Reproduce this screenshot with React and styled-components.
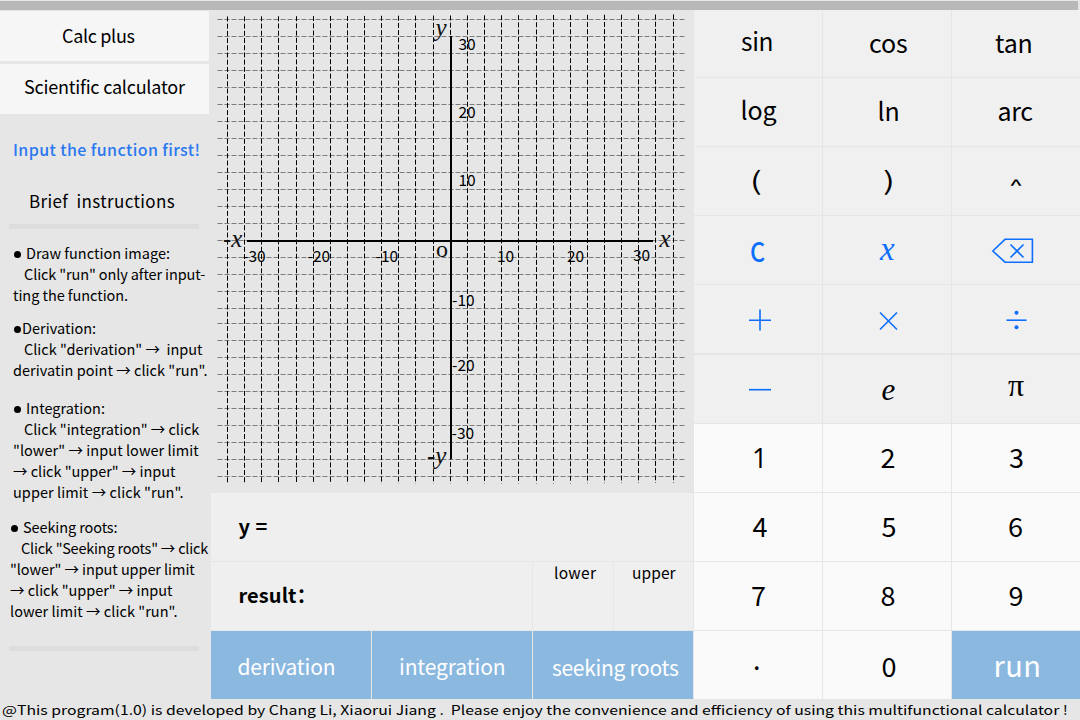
import React from 'react';
import styled, { createGlobalStyle } from 'styled-components';

const SANS = '"Noto Sans CJK SC", "Open Sans", sans-serif';
const SERIF = '"Liberation Serif", "Times New Roman", serif';
const BLUE = '#0d6efd';

const GlobalStyle = createGlobalStyle`
  * { box-sizing: border-box; }
  body { margin: 0; background: #e6e6e6; color: #000; font-family: ${SANS}; }
`;

const Page = styled.div`
  width: 1080px;
  height: 720px;
  overflow: hidden;
  display: flex;
  flex-direction: column;
  background: #e6e6e6;
`;

const TitleBar = styled.div`
  height: 9px;
  margin: 1px 2px 0 0;
  flex: none;
  background: #b8b8b8;
`;

const Main = styled.div`
  height: 689px;
  flex: none;
  display: grid;
  grid-template-columns: 211px 482px 387px;
`;

/* A single line of text: $left is the inset and $base the baseline, both from the box it sits in. */
const Label = styled.span`
  display: block;
  flex: none;
  white-space: pre;
  line-height: 1;
  font-family: ${(p) => p.$font || SANS};
  font-size: ${(p) => p.$size}px;
  font-weight: ${(p) => p.$weight || 400};
  font-style: ${(p) => (p.$italic ? 'italic' : 'normal')};
  letter-spacing: ${(p) => p.$track || 0}px;
  color: ${(p) => p.$color || 'inherit'};
  margin-left: ${(p) => p.$left}px;
  margin-top: ${(p) => p.$base - Math.round(p.$size * (p.$ascent || 0.936))}px;
  transform: ${(p) => (p.$stretch ? `scaleX(${p.$stretch})` : 'none')};
  transform-origin: left;
`;

/* ---------- sidebar ---------- */

const Sidebar = styled.aside`
  display: flex;
  flex-direction: column;
  padding-top: 1px;
  min-width: 0;
`;

const MenuItem = styled.div`
  width: 209px;
  height: 50px;
  margin-bottom: 3px;
  flex: none;
  display: flex;
  align-items: flex-start;
  background: #f6f6f6;
`;

const Banner = styled.div`
  height: ${(p) => p.$height}px;
  flex: none;
  display: flex;
  align-items: flex-start;
`;

const Rule = styled.div`
  width: 190px;
  height: 5px;
  margin-left: 9px;
  flex: none;
  background: #dedddd;
`;

const Instructions = styled.div`
  height: 417px;
  flex: none;
  padding-top: 13px;
`;

const Topic = styled.div`
  padding-left: ${(p) => p.$inset}px;
  margin-bottom: ${(p) => p.$gap}px;
`;

const Line = styled.div`
  height: 21px;
  line-height: 21px;
  font-size: 14.5px;
  white-space: pre;
  padding-left: ${(p) => p.$indent || 0}px;
  letter-spacing: ${(p) => p.$track || 0}px;
`;

const Bullet = styled.span`
  display: inline-block;
  width: 7px;
  height: 7px;
  border-radius: 50%;
  background: #000;
  margin: 0 ${(p) => p.$gap}px 1px 1px;
`;

const topics = [
  {
    inset: 13, gap: 12, dot: 5, title: 'Draw function image:', track: 0.01,
    lines: [['Click "run" only after input-', -0.12, 11], ['ting the function.', -0.05, 0]],
  },
  {
    inset: 13, gap: 17, dot: 1, title: 'Derivation:', track: 0.02,
    lines: [['Click "derivation" →  input', 0, 11], ['derivatin point → click "run".', 0.03, 0]],
  },
  {
    inset: 13, gap: 14, dot: 5, title: 'Integration:', track: 0.03,
    lines: [
      ['Click "integration" → click', -0.03, 11], ['"lower" → input lower limit', 0.05, 0],
      ['→ click "upper" → input', -0.03, 0], ['upper limit → click "run".', 0.06, 0],
    ],
  },
  {
    inset: 10, gap: 0, dot: 5, title: 'Seeking roots:', track: -0.1,
    lines: [
      ['Click "Seeking roots" → click', -0.22, 11], ['"lower" → input upper limit', -0.08, 0],
      ['→ click "upper" → input', -0.03, 0], ['lower limit → click "run".', 0.04, 0],
    ],
  },
];

/* ---------- plot and fields ---------- */

const Center = styled.section`
  display: flex;
  flex-direction: column;
`;

const PlotArea = styled.div`
  height: 482px;
  margin-bottom: 1px;
  flex: none;
  svg { display: block; }
`;

const Fields = styled.div`
  display: grid;
  gap: 1px;
  grid-template-columns: ${(p) => p.$columns};
  height: 68px;
  margin-bottom: 1px;
`;

const Field = styled.div`
  display: flex;
  align-items: flex-start;
  background: #efefef;
`;

const Action = styled(Field)`
  background: #8ab8df;
  color: #fff;
`;

const columns = [227.5, 244.5, 261.5, 278.5, 296.5, 313.5, 330.5, 347.5, 364.5, 381.5, 398.5, 415.5, 433.5, 450.5,
  467.5, 484.5, 501.5, 518.5, 536.5, 553.5, 570.5, 587.5, 604.5, 621.5, 638.5, 655.5, 673.5];
const rows = [19.5, 36.5, 53.5, 70.5, 87.5, 104.5, 121.5, 138.5, 155.5, 172.5, 189.5, 206.5, 223.5, 240.5, 257.5,
  274.5, 291.5, 308.5, 323.5, 340.5, 357.5, 374.5, 391.5, 408.5, 425.5, 442.5, 459.5, 476.5];
const ticks = [
  ['30', 458.5, 50], ['20', 458.5, 118], ['10', 458.5, 186], ['-10', 452, 306], ['-20', 452, 371], ['-30', 451.5, 439],
  ['-30', 243, 262], ['-20', 307.5, 262], ['-10', 375.5, 262], ['10', 497, 262], ['20', 567, 262], ['30', 633, 261],
];

const TickText = styled.text`
  font: 15.5px ${SANS};
`;

const AxisText = styled.text`
  font: italic 25px ${SERIF};
  fill: #111;
`;

const OriginText = styled(AxisText)`
  font-style: normal;
  font-size: 24px;
`;

function Plot() {
  return (
    <PlotArea>
      <svg width="482" height="482" viewBox="211 10 482 482">
        {rows.map((y) => (
          <line key={y} x1="217.5" x2="686" y1={y} y2={y} stroke="#7c7c7c" strokeDasharray="5 2" />
        ))}
        {columns.map((x, i) => (
          <line key={x} x1={x} x2={x} y1={16.5 - i * 0.08} y2={484.5 - i * 0.06} stroke="#000" strokeDasharray="5 2.2" />
        ))}
        <path d="M247 241H653M451 36V459" stroke="#000" strokeWidth="2" />
        {ticks.map(([t, x, y]) => (
          <TickText key={`${x}${y}`} x={x} y={y}>{t}</TickText>
        ))}
        <AxisText x="435.5" y="36">y</AxisText>
        <AxisText x="427" y="464">-y</AxisText>
        <AxisText x="223" y="247">-x</AxisText>
        <AxisText x="659.5" y="247">x</AxisText>
        <OriginText x="436" y="257">o</OriginText>
      </svg>
    </PlotArea>
  );
}

/* ---------- keypad ---------- */

const Keypad = styled.section`
  display: grid;
  grid-template-columns: 128px 128px 129px;
  grid-template-rows: 67px 68px 68px 68px 68px 69px 68px 68px 68px 68px;
  gap: 1px;
  padding-left: 1px;
`;

const Key = styled.div`
  display: flex;
  align-items: flex-start;
  min-width: 0;
  margin-top: ${(p) => (p.$spaced ? 1 : 0)}px;
  background: ${(p) => ({ fn: '#f0f0f0', num: '#fafafa', go: '#8ab8df' })[p.$kind]};
  color: ${(p) => (p.$kind === 'go' ? '#fff' : '#000')};
  svg { display: block; fill: none; stroke: ${BLUE}; stroke-width: 1.6; }
`;

const OpIcon = ({ name, children }) => (
  <svg width="128" height="68" viewBox="0 0 128 68" role="img" aria-label={name}>{children}</svg>
);

const fn = (text, left, base, extra) => ({ kind: 'fn', text, left, base, size: 25, ...extra });
const num = (text, left, base, extra) => ({ kind: 'num', text, left, base, size: 27, ...extra });

const keys = [
  fn('sin', 47, 42, { size: 24.5, track: -0.3 }), fn('cos', 46, 43, { track: -0.15 }), fn('tan', 43, 43, { track: -0.2 }),
  fn('log', 46.5, 42, { track: -0.1 }), fn('ln', 54.5, 43, { track: -0.1 }), fn('arc', 45.5, 43, { track: -0.4 }),
  fn('(', 55.5, 43, { size: 25, stretch: 1.4 }), fn(')', 59.5, 43, { size: 25, stretch: 1.4 }),
  fn('^', 56.5, 43, { size: 14, stretch: 1.75, weight: 500 }),
  fn('C', 56, 46, { size: 27, stretch: 0.87, color: BLUE, weight: 500 }),
  fn('x', 57, 45, { size: 33, font: SERIF, italic: true, ascent: 0.837, color: BLUE }),
  {
    kind: 'fn',
    icon: (
      <OpIcon name="backspace">
        <path d="M40.8 35 53 23.3H80.4V46.2H53Z" />
        <path d="M58.5 28.5 71.5 41.5M71.5 28.5 58.5 41.5" />
      </OpIcon>
    ),
  },
  { kind: 'fn', icon: <OpIcon name="plus"><path d="M55 35.3H77M66 24.5V45.5" /></OpIcon> },
  { kind: 'fn', icon: <OpIcon name="times"><path d="M57 27.5 74 44.5M74 27.5 57 44.5" /></OpIcon> },
  {
    kind: 'fn',
    icon: (
      <OpIcon name="divide">
        <path d="M54.5 35.2H74.5" />
        <circle cx="64.5" cy="27.8" r="2" fill={BLUE} stroke="none" />
        <circle cx="64.5" cy="42.3" r="2" fill={BLUE} stroke="none" />
      </OpIcon>
    ),
  },
  { kind: 'fn', spaced: true, icon: <OpIcon name="minus"><path d="M55 34.7H77" /></OpIcon> },
  fn('e', 58.5, 45, { size: 31, font: SERIF, italic: true, ascent: 0.837, spaced: true }),
  fn('π', 56, 41, { size: 32, font: SERIF, ascent: 0.837, spaced: true }),
  num('1', 58, 44, { font: '"Open Sans", sans-serif', ascent: 0.888 }), num('2', 57.5, 44), num('3', 57, 44),
  num('4', 58.5, 44), num('5', 58.5, 44), num('6', 56, 44),
  num('7', 57, 44), num('8', 57.5, 44), num('9', 56.5, 44),
  num('.', 59, 39), num('0', 58.5, 46),
  { kind: 'go', text: 'run', left: 41.5, base: 46, size: 29, track: 0.4 },
];

export default function App() {
  return (
    <Page>
      <GlobalStyle />
      <TitleBar />
      <Main>
        <Sidebar>
          <MenuItem><Label $size={18} $left={62} $base={32} $track={-0.33}>Calc plus</Label></MenuItem>
          <MenuItem><Label $size={18} $left={24} $base={30} $track={-0.22}>Scientific calculator</Label></MenuItem>
          <Banner $height={57}>
            <Label $size={16} $left={13} $base={39} $track={0.4} $weight={500} $color="#2b78f0">Input the function first!</Label>
          </Banner>
          <Banner $height={50}>
            <Label $size={17} $left={29} $base={34} $track={0.36}>{'Brief  instructions'}</Label>
          </Banner>
          <Rule />
          <Instructions>
            {topics.map((t) => (
              <Topic key={t.title} $inset={t.inset} $gap={t.gap}>
                <Line $track={t.track}><Bullet $gap={t.dot} />{t.title}</Line>
                {t.lines.map(([text, track, indent]) => (
                  <Line key={text} $track={track} $indent={indent}>{text}</Line>
                ))}
              </Topic>
            ))}
          </Instructions>
          <Rule />
        </Sidebar>
        <Center>
          <Plot />
          <Fields $columns="482px">
            <Field><Label $size={20} $left={27.5} $base={42} $track={0.5} $weight={700}>y =</Label></Field>
          </Fields>
          <Fields $columns="321px 80px 79px">
            <Field><Label $size={20} $left={27.5} $base={42} $track={0.1} $weight={700}>result：</Label></Field>
            <Field><Label $size={15.5} $left={21} $base={18} $track={0.3}>lower</Label></Field>
            <Field><Label $size={15.5} $left={18} $base={18} $track={0.1}>upper</Label></Field>
          </Fields>
          <Fields $columns="160px 160px 160px">
            <Action><Label $size={21} $left={26.5} $base={45} $track={-0.2}>derivation</Label></Action>
            <Action><Label $size={21} $left={27} $base={45} $track={-0.12}>integration</Label></Action>
            <Action><Label $size={21} $left={19} $base={46} $track={-0.3}>seeking roots</Label></Action>
          </Fields>
        </Center>
        <Keypad>
          {keys.map((k, i) => (
            <Key key={i} $kind={k.kind} $spaced={k.spaced}>
              {k.icon || (
                <Label $size={k.size} $left={k.left} $base={k.base} $track={k.track} $font={k.font} $weight={k.weight}
                  $italic={k.italic} $ascent={k.ascent} $color={k.color} $stretch={k.stretch}>{k.text}</Label>
              )}
            </Key>
          ))}
        </Keypad>
      </Main>
      <Label as="footer" $size={13} $left={2} $base={16} $stretch={1.214} $color="#000">
        {'@This program(1.0) is developed by Chang Li, Xiaorui Jiang .  Please enjoy the convenience and efficiency of using this multifunctional calculator !'}
      </Label>
    </Page>
  );
}
